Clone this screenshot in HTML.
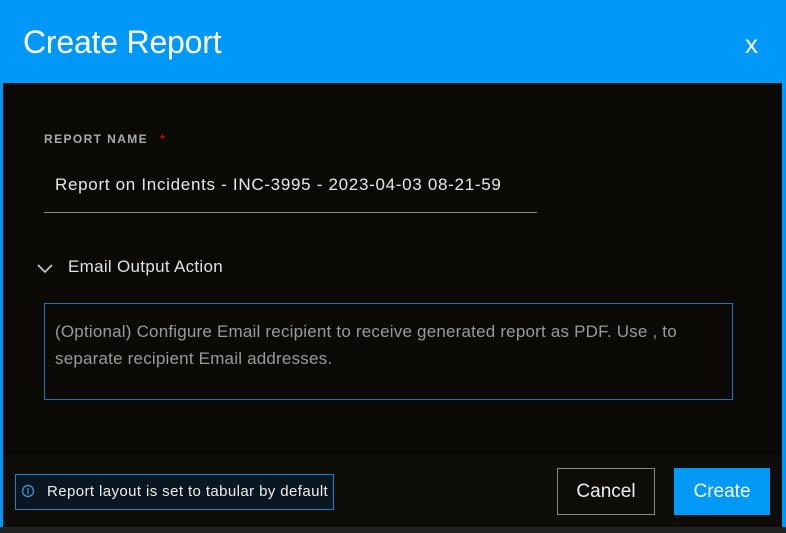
<!DOCTYPE html>
<html><head><style>
body{margin:0;width:786px;height:533px;background:#000;font-family:"Liberation Sans",sans-serif;overflow:hidden;position:relative}
.abs{position:absolute}
</style></head><body>
<div class="abs" style="left:0;top:0;width:786px;height:533px;background:#0098f8"></div>
<div class="abs" style="left:3px;top:83px;width:779px;height:444px;background:#0b0a07"></div>
<div class="abs" style="left:3px;top:455px;width:779px;height:72px;background:#0e0d0a"></div>
<div class="abs" style="left:0;top:527px;width:786px;height:6px;background:#222"></div>
<div class="abs" style="left:23px;top:24px;font-size:32px;color:#fff;font-weight:300;letter-spacing:-0.2px">Create Report</div>
<div class="abs" style="left:745px;top:29px;font-size:26px;color:#fff">x</div>
<div class="abs" style="left:44px;top:132px;font-size:12px;font-weight:bold;color:#aaa;letter-spacing:1.4px">REPORT NAME<span style="color:#d00;margin-left:12px">*</span></div>
<div class="abs" style="left:55px;top:175px;font-size:17px;color:#e8e8e8;letter-spacing:0.7px">Report on Incidents - INC-3995 - 2023-04-03 08-21-59</div>
<div class="abs" style="left:44px;top:212px;width:493px;height:1px;background:#888"></div>
<svg class="abs" style="left:36px;top:262px" width="18" height="12"><path d="M2 3 L9 10 L16 3" stroke="#ccc" stroke-width="1.6" fill="none"/></svg>
<div class="abs" style="left:68px;top:257px;font-size:17px;color:#e0e0e0;letter-spacing:0.3px">Email Output Action</div>
<div class="abs" style="left:44px;top:303px;width:687px;height:95px;border:1px solid #1c77b0"></div>
<div class="abs" style="left:55px;top:318px;width:660px;font-size:17px;line-height:27px;color:#9a9a9a;letter-spacing:0.2px">(Optional) Configure Email recipient to receive generated report as PDF. Use , to separate recipient Email addresses.</div>
<div class="abs" style="left:15px;top:474px;width:317px;height:34px;border:1px solid #1c84c8;background:#0a1620"></div>
<svg class="abs" style="left:21px;top:484px" width="14" height="14"><circle cx="7" cy="7" r="5.5" stroke="#3a90d0" stroke-width="1.4" fill="none"/><line x1="7" y1="4" x2="7" y2="10" stroke="#3a90d0" stroke-width="1.3"/></svg>
<div class="abs" style="left:47px;top:483px;font-size:15px;color:#eee;letter-spacing:0.4px">Report layout is set to tabular by default</div>
<div class="abs" style="left:557px;top:468px;width:98px;height:47px;border:1px solid #888;box-sizing:border-box;color:#eee;font-size:19px;text-align:center;line-height:45px">Cancel</div>
<div class="abs" style="left:674px;top:468px;width:96px;height:47px;background:#0099f5;color:#fff;font-size:19px;text-align:center;line-height:47px">Create</div>
</body></html>
